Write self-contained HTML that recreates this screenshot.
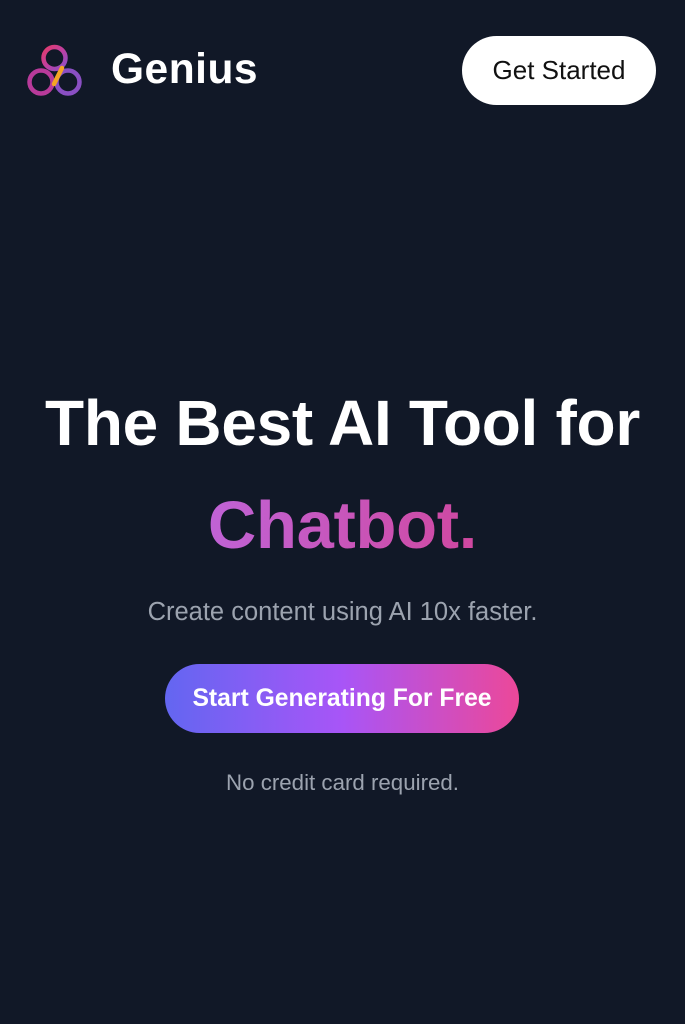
<!DOCTYPE html>
<html><head><meta charset="utf-8"><style>
html,body{margin:0;padding:0;background:#111827;width:685px;height:1024px;overflow:hidden;font-family:"Liberation Sans",sans-serif;}
.abs{position:absolute;}
.logo{left:26px;top:44px;}
.brand{left:111px;top:46px;font-size:42.5px;font-weight:bold;color:#fff;letter-spacing:0.5px;}
.gs{left:462px;top:36px;width:194px;height:69px;background:#fff;border-radius:35px;color:#111;font-size:26px;display:flex;align-items:center;justify-content:center;}
h1{position:absolute;left:0;width:685px;text-align:center;margin:0;font-size:64px;line-height:1;font-weight:bold;color:#fff;letter-spacing:-0.3px;}
.chat{background:linear-gradient(90deg,#c063d6,#d048a0);-webkit-background-clip:text;background-clip:text;color:transparent;font-size:67px;}
.sub{left:0;width:685px;top:598px;text-align:center;color:#9ca3af;font-size:25.5px;}
.btn{left:165px;top:664px;width:354px;height:69px;border-radius:35px;background:linear-gradient(90deg,#6366f1,#a855f7 50%,#ec4899);color:#fff;font-size:24.7px;font-weight:bold;display:flex;align-items:center;justify-content:center;}
.nc{left:0;width:685px;top:770px;text-align:center;color:#9ca3af;font-size:22.3px;}
</style></head><body>
<svg class="abs logo" width="58" height="56" viewBox="0 0 58 56">
<defs><linearGradient id="g" x1="0" y1="0" x2="1" y2="1"><stop offset="0" stop-color="#e33b6b"/><stop offset="0.5" stop-color="#c03fa0"/><stop offset="1" stop-color="#8b4fc8"/></linearGradient></defs>
<circle cx="28.5" cy="14" r="11" fill="none" stroke="url(#g)" stroke-width="4.5"/>
<circle cx="15" cy="38" r="11.5" fill="none" stroke="#b83a9a" stroke-width="4.5"/>
<circle cx="42" cy="38" r="11.5" fill="none" stroke="#8a4fc3" stroke-width="4.5"/>
<path d="M36 24 L28 40" stroke="#f5a524" stroke-width="4.5" stroke-linecap="round"/>
</svg>
<div class="abs brand">Genius</div>
<div class="abs gs">Get Started</div>
<h1 style="top:391px">The Best AI Tool for</h1>
<h1 style="top:492px"><span class="chat">Chatbot.</span></h1>
<div class="abs sub">Create content using AI 10x faster.</div>
<div class="abs btn">Start Generating For Free</div>
<div class="abs nc">No credit card required.</div>
</body></html>
